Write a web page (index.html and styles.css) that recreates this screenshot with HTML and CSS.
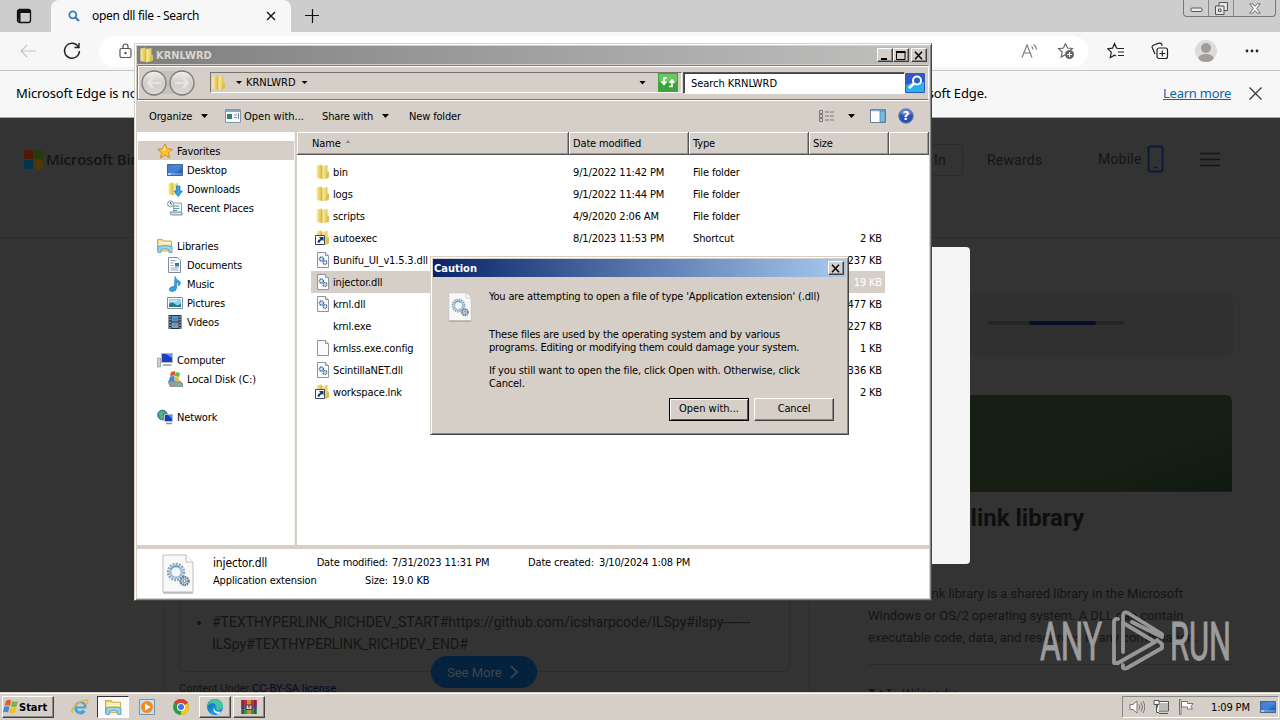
FILE: index.html
```html
<!DOCTYPE html>
<html lang="en">
<head>
<meta charset="utf-8">
<title>Desktop</title>
<link rel="stylesheet" href="styles.css">
</head>
<body>
<svg class="sprite" width="0" height="0">
  <defs>
    <linearGradient id="gFold" x1="0" x2="1"><stop offset="0" stop-color="#fbf2b4"/><stop offset=".5" stop-color="#ecd264"/><stop offset="1" stop-color="#e2c248"/></linearGradient>
    <linearGradient id="gFold2" x1="0" x2="1"><stop offset="0" stop-color="#fbf3b6"/><stop offset="1" stop-color="#e3c44c"/></linearGradient>
    <linearGradient id="gBlue" x1="0" y1="0" x2="1" y2="1"><stop offset="0" stop-color="#1b46a8"/><stop offset=".5" stop-color="#4486e0"/><stop offset="1" stop-color="#163c92"/></linearGradient>
    <linearGradient id="gEdge" x1="0" y1="0" x2="1" y2="1"><stop offset="0" stop-color="#0c59a4"/><stop offset=".6" stop-color="#1b9de2"/><stop offset="1" stop-color="#1070c4"/></linearGradient>
    <linearGradient id="gNav" x1="0" y1="0" x2="0" y2="1"><stop offset="0" stop-color="#f1f0ef"/><stop offset=".5" stop-color="#cfcdc9"/><stop offset="1" stop-color="#dddbd8"/></linearGradient>
  </defs>
  <symbol id="folder" viewBox="0 0 16 16"><path d="M1.500 1.500 7 .5V15l-5.500-1z" fill="url(#gFold)"/><path d="M7 2l5.500-1v13L7 15.500z" fill="url(#gFold2)"/><path d="M12.500 7 14 8v5.500l-4 1.500z" fill="#dfc04a"/><path d="M7 2v13" stroke="#c9a83a" stroke-width=".7"/></symbol>
  <symbol id="shortcut" viewBox="0 0 16 16"><use href="#folder" width="16" height="16"/><path d="M.5 5.500h9v9h-9z" fill="#fff" stroke="#3b4560"/><path d="M2.500 12.500q0-3 3-3.500L4 7h4.500v4L7 10q-2 .5-2.500 2.800z" fill="#17336f"/></symbol>
  <symbol id="page" viewBox="0 0 16 16"><path d="M2.500.5h8l3 3v12h-11z" fill="#fbfbfd" stroke="#8e959d"/><path d="M10.500.5v3h3" fill="#e4e7ea" stroke="#8e959d"/></symbol>
  <symbol id="dll" viewBox="0 0 16 16"><use href="#page" width="16" height="16"/><circle cx="6.500" cy="7" r="2" fill="#dce9f5" stroke="#466c9d" stroke-width="1.500" stroke-dasharray="1.200 .5"/><circle cx="10" cy="10.500" r="1.800" fill="#dce9f5" stroke="#466c9d" stroke-width="1.300" stroke-dasharray="1.200 .5"/></symbol>
  <symbol id="dllbig" viewBox="0 0 32 40"><path d="M1 1h23l7 7v30H1z" fill="#f8f8f8" stroke="#bfbfbf"/><path d="M24 1v7h7" fill="#fff" stroke="#bfbfbf"/><circle cx="14" cy="18" r="8" fill="none" stroke="#8ea5b6" stroke-width="2.500" stroke-dasharray="2 1.100"/><circle cx="14" cy="18" r="5.800" fill="#f4f8fb" stroke="#9fbfdc" stroke-width="2.600"/><path d="M9 15a6 6 0 0 1 8-2" fill="none" stroke="#4c8b98"/><circle cx="22.500" cy="27" r="4" fill="#dce6ee" stroke="#5f7890" stroke-width="2.400" stroke-dasharray="1.600 .7"/><circle cx="22.500" cy="27" r="1.500" fill="#fff" stroke="#5f7890"/><path d="M1 39h30" stroke="#999"/></symbol>
  <symbol id="desktop" viewBox="0 0 16 16"><path d="M.5 2.500h15v11H.5z" fill="url(#gBlue)" stroke="#47648f"/><path d="M1 3h14L1 9z" fill="#5b93e4" opacity=".6"/><path d="M1 12h14" stroke="#9cc4ee"/><path d="M1 12h3" stroke="#eee"/></symbol>
  <symbol id="star" viewBox="0 0 16 16"><path d="M8 .8l2.200 5 5.200.5-4 3.500 1.200 5.200L8 12.200 3.400 15l1.200-5.200-4-3.500 5.200-.5z" fill="#fcc32c" stroke="#d8892c"/><path d="M8 3l1 3.600L5 8z" fill="#ffee8e"/></symbol>
  <symbol id="downloads" viewBox="0 0 16 16"><use href="#folder" width="14" height="16"/><path d="M9.500 5h3.500v5h2.500L11.300 15.500 7 10h2.500z" fill="#37a2ea" stroke="#1674bc" stroke-width=".7"/></symbol>
  <symbol id="recent" viewBox="0 0 16 16"><path d="M4.500 3h10v10h-8V5z" fill="#edf4f8" stroke="#93a4ad"/><path d="M3 12h11q2 0 1 3H5q-2 0-2-3z" fill="#d4dde1" stroke="#84939b"/><path d="M7 6h5M7 8.500h5M7 10.500h3" stroke="#6d97b0"/><circle cx="3.500" cy="3.800" r="3" fill="#f3f6f8" stroke="#87969f"/><path d="M3.500 2v2H5" fill="none" stroke="#567"/></symbol>
  <symbol id="libraries" viewBox="0 0 16 16"><path d="M.5 3V1.500h5L7 3h7.500v10H.5z" fill="#f1dd82" stroke="#c9ad54"/><path d="M2 4.500h12M2 6h12" stroke="#fffadf"/><path d="M1 8.500q7-2 14 0v6h-3v-3q-4-2-8 0v3H1z" fill="#9ad5ed" stroke="#4c9fc8" stroke-width=".8"/></symbol>
  <symbol id="documents" viewBox="0 0 16 16"><path d="M1.500.5h9l3 3v12h-12z" fill="#fff" stroke="#7c8b9b"/><path d="M3.500 3.500h5M3.500 6h3M3.500 8.500h3M3.500 11h8M3.500 13h8" stroke="#88a4c4"/><path d="M8 6h4v3.500H8z" fill="#3d74b4"/></symbol>
  <symbol id="music" viewBox="0 0 16 16"><path d="M8 .5q1 3.500 5 5 1 3-1.500 4.500.5-3-2-4V12q0 3-4 3.500-4-.3-3-3 1.500-2.500 5-2z" fill="#38a1df" stroke="#2481c1" stroke-width=".7"/></symbol>
  <symbol id="pictures" viewBox="0 0 16 16"><path d="M.5 2.500h15v11H.5z" fill="#fff" stroke="#7e8e9e"/><path d="M2 4h12v8H2z" fill="#8bd0ef"/><path d="M2 9q3-3 6 0t6-1v4H2z" fill="#287984"/><path d="M3 6h7" stroke="#e9f7fd"/></symbol>
  <symbol id="videos" viewBox="0 0 16 16"><path d="M1.500 1h13v14h-13z" fill="#28313c"/><path d="M4.500 2h7v5.500h-7z" fill="#4f96cf"/><path d="M4.500 8.500h7V14h-7z" fill="#66a7d6"/><path d="M3 2v13M13 2v13" stroke="#e9edf0" stroke-dasharray="1.500 1.300"/><path d="M6 5l4 1M6 12l4-2" stroke="#b4574a"/></symbol>
  <symbol id="computer" viewBox="0 0 16 16"><path d="M.5 6h3v9h-3z" fill="#cdd1d4" stroke="#8e969d" stroke-width=".7"/><path d="M4.500 1.500h11v9h-11z" fill="#1d3fc0" stroke="#b5bbc4"/><path d="M9 2h6v4z" fill="#5d93f2"/><path d="M7 12h7l1 2H5z" fill="#a9b2bb"/></symbol>
  <symbol id="disk" viewBox="0 0 16 16"><path d="M1 10h12l3 3v2.500H3z" fill="#8f9ca2" stroke="#69777e" stroke-width=".6"/><path d="M10 14h4" stroke="#5ce062"/><path d="M4 1l4-1v4.500L3 5z" fill="#e1582a"/><path d="M8.500 1 13 2l-1 4-4-1z" fill="#68b63d"/><path d="M3 5.500 7.500 5v5L2 10z" fill="#3b86d7"/><path d="M8 5.500l4 1-.5 4.500-4-1z" fill="#f3bd29"/></symbol>
  <symbol id="network" viewBox="0 0 16 16"><circle cx="5.500" cy="6" r="5" fill="#3b8fb5" stroke="#356a80" stroke-width=".6"/><path d="M2 4q3-3 5-1L5 6l2 3-3 1z" fill="#63b368"/><path d="M7.500 5.500h8v7h-8z" fill="#183cc0" stroke="#b9c1ca"/><path d="M11 6h4v4z" fill="#508af0"/><path d="M9 14.500h6" stroke="#89939d" stroke-width="1.500"/></symbol>
</svg>

<div class="screen">
  <main class="edge">
    <header class="tabstrip">
      <div class="tabmenu"><svg width="16" height="16" viewBox="0 0 16 16"><rect x="1.500" y="1.500" width="13" height="13" rx="2" fill="none" stroke="#111" stroke-width="1.300"/><path d="M1.500 2h13v3h-13zM1.500 5h3v9h-2z" fill="#111"/></svg></div>
      <div class="tab">
        <svg width="12" height="12" viewBox="0 0 12 12" fill="none" stroke="#3c7dbf" stroke-width="1.800"><circle cx="4.800" cy="4.800" r="3.500"/><path d="M7.500 7.500l3.500 3.500" stroke-width="2.300"/></svg>
        <span class="tabtitle">open dll file - Search</span>
        <svg width="10" height="10" viewBox="0 0 10 10" stroke="#111" stroke-width="1.300"><path d="M1 1l8 8M9 1 1 9"/></svg>
      </div>
      <svg class="newtab" width="14" height="14" viewBox="0 0 14 14" stroke="#111" stroke-width="1.200"><path d="M7.500 0v14M0 6.500h14"/></svg>
      <div class="winctl">
        <span class="wc1"><svg width="13" height="6" viewBox="0 0 13 6"><rect x="1" y="1" width="11" height="3.500" rx="1" fill="#eee" stroke="#555"/></svg></span>
        <span class="wc2"><svg width="13" height="13" viewBox="0 0 13 13" fill="#e6e6e6" stroke="#555"><path d="M4 .5h8.500v8H4z"/><path d="M.5 4H9v8.500H.5z"/><path d="M3.500 7h2.500v2.500H3.500z"/></svg></span>
        <span class="wc3"><svg width="12" height="11" viewBox="0 0 12 11" fill="#f5f5f5" stroke="#666" stroke-width=".9"><path d="M.8.8h3L6 3.300 8.200.8h3L7.800 5.500l3.400 4.700h-3L6 7.700 3.800 10.200h-3l3.400-4.700z"/></svg></span>
      </div>
    </header>
    <div class="toolbar">
      <svg class="back" width="16" height="14" viewBox="0 0 16 14" fill="none" stroke="#c5c5c5" stroke-width="1.200"><path d="M16 7H1M7 1 1 7l6 6"/></svg>
      <svg class="reload" width="18" height="18" viewBox="0 0 18 18" fill="none" stroke="#222" stroke-width="1.400"><path d="M15.500 5A7.500 7.500 0 1 0 16.500 9"/><path d="M16 1v4.500h-4.500"/></svg>
      <div class="omnibox">
        <svg width="14" height="16" viewBox="0 0 14 16" fill="none" stroke="#555" stroke-width="1.200"><rect x="1" y="5.500" width="11" height="9" rx="1.500"/><path d="M4 5.500V3.500a2.500 2.500 0 0 1 5 0v2"/><circle cx="6.500" cy="10" r=".6" fill="#555"/></svg>
        <span class="grow"></span>
        <svg width="17" height="16" viewBox="0 0 17 16" fill="none" stroke="#777" stroke-width="1.100"><path d="M1 14.500 6 2l5 12.500M3 10h6.300M10.500 3.500q1.500 1 1.500 3M12.500 1.500Q15.500 3.500 15.500 6.500"/></svg>
        <svg width="18" height="18" viewBox="0 0 18 18"><path d="M8.500 1.500l2 4.500 5 .5-3.500 3M8.500 1.500 6.500 6l-5 .6 3.700 3.400-1 5 4-2.300" fill="none" stroke="#666" stroke-width="1.200"/><circle cx="12.500" cy="12.500" r="4.500" fill="#666"/><path d="M12.500 10v5M10 12.500h5" stroke="#fff"/></svg>
      </div>
      <div class="actions">
        <svg width="18" height="18" viewBox="0 0 18 18" fill="none" stroke="#222" stroke-width="1.200"><path d="M11 6.500 9.500 6 7.500 1.500 5.500 6.200l-4.700.5 3.500 3.500-1 5.300 4.200-2.300 1.500.8M11 6.500h6M11 10h6M11 13.500h6"/></svg>
        <svg width="18" height="18" viewBox="0 0 18 18" fill="none" stroke="#222" stroke-width="1.200"><rect x="6" y="6" width="10.500" height="10.500" rx="2"/><path d="M11.300 8.500v6M8.300 11.500h6M4 12 1.200 5.500Q.8 4 2.300 3.200L8 1.200q2-.5 2.700 1l.5 1.500"/></svg>
        <svg width="22" height="22" viewBox="0 0 22 22"><circle cx="11" cy="11" r="11" fill="#dedbd8"/><circle cx="11" cy="8" r="5" fill="#a09d9a"/><ellipse cx="11" cy="18" rx="7.500" ry="4" fill="#a09d9a"/></svg>
        <svg width="14" height="4" viewBox="0 0 14 4" fill="#222"><circle cx="2" cy="2" r="1.400"/><circle cx="7" cy="2" r="1.400"/><circle cx="12" cy="2" r="1.400"/></svg>
      </div>
    </div>
    <div class="infobar">
      <span class="infoleft">Microsoft Edge is not</span>
      <span class="inforight">Microsoft Edge.</span>
      <a class="learn">Learn more</a>
      <svg width="13" height="13" viewBox="0 0 13 13" stroke="#333" stroke-width="1.200"><path d="M.5.5l12 12M12.500.5l-12 12"/></svg>
    </div>
    <section class="page">
      <div class="binghead">
        <svg width="19" height="19" viewBox="0 0 19 19"><path d="M0 0h9v9H0z" fill="#4f1708"/><path d="M10 0h9v9h-9z" fill="#243a08"/><path d="M0 10h9v9H0z" fill="#05354d"/><path d="M10 10h9v9h-9z" fill="#4f3908"/></svg>
        <b class="bing">Microsoft Bing</b>
        <span class="signin">In</span>
        <span class="rewards">Rewards</span>
        <span class="mobile">Mobile</span>
        <svg class="phone" width="18" height="28" viewBox="0 0 18 28"><rect x="1.500" y="1.500" width="14" height="25" rx="2" fill="none" stroke="#10183a" stroke-width="2"/><path d="M6.500 22.500h4" stroke="#10183a" stroke-width="1.500"/></svg>
        <svg width="20" height="15" viewBox="0 0 20 15" stroke="#151515" stroke-width="1.600"><path d="M0 1.500h20M0 7.500h20M0 13.500h20"/></svg>
      </div>
      <div class="results">
        <div class="answer">
          <div class="quote">
            <ul><li>#TEXTHYPERLINK_RICHDEV_START#https://github.com/icsharpcode/ILSpy#ilspy-------<br>ILSpy#TEXTHYPERLINK_RICHDEV_END#</li></ul>
          </div>
          <div class="license">Content Under <a>CC-BY-SA license</a></div>
          <div class="seemore">See More <svg width="8" height="14" viewBox="0 0 8 14" fill="none" stroke="#41464b" stroke-width="1.600"><path d="M1 1l6 6-6 6"/></svg></div>
        </div>
        <aside class="panel">
          <div class="loader"><span class="track"><i></i></span></div>
          <div class="hero"></div>
          <h2>Dynamic link library</h2>
          <p><span class="first">A dynamic link library is a shared library in the Microsoft</span><span>Windows or OS/2 operating system. A DLL can contain</span><span>executable code, data, and resources in any combination.</span></p>
          <div class="wiki"><b>W</b><span>Wikipedia</span></div>
        </aside>
      </div>
    </section>
  </main>
  <div class="modal"></div>

  <section class="explorer win">
    <div class="titlebar gray">
      <svg width="16" height="16"><use href="#folder"/></svg><b>KRNLWRD</b>
      <span class="cap"><svg width="10" height="9" viewBox="0 0 10 9"><path d="M1 7h6v2H1z"/></svg></span><span class="cap"><svg width="10" height="9" viewBox="0 0 10 9"><path d="M.5 1h8.500v7.500H.5z" fill="none" stroke="#000"/><path d="M0 0h9.500v2H0z"/></svg></span><span class="cap close"><svg width="10" height="9" viewBox="0 0 10 9" stroke="#000" stroke-width="1.500"><path d="M1 .8l7 7.400M8 .8 1 8.200"/></svg></span>
    </div>
    <div class="navrow">
      <div class="navbtns">
        <svg width="54" height="26" viewBox="0 0 54 26"><path d="M10 1h33v23H10z" fill="#c3c0bb"/><g fill="url(#gNav)" stroke="#7d7b77" stroke-width="1.300"><circle cx="13" cy="13" r="12"/><circle cx="41" cy="13" r="12"/></g><path d="M20 13H7M12 8l-5 5 5 5M34 13h13M42 8l5 5-5 5" fill="none" stroke="#e6e5e3" stroke-width="2.500"/></svg>
      </div>
      <div class="address">
        <svg width="16" height="16"><use href="#folder"/></svg>
        <i class="dn small"></i><span class="crumb">KRNLWRD</span><i class="dn small"></i><span class="grow"></span><i class="dn"></i>
        <svg class="refresh" width="20" height="19" viewBox="0 0 20 19"><rect width="20" height="19" fill="#3aa53b"/><path d="M1 1h18v8H1z" fill="#6bc765"/><path d="M9 5H6v6M3.500 8.500 6 11.500l2.500-3M11 13.500h3V8M11.500 10 14 7l2.500 3" fill="none" stroke="#fff" stroke-width="1.600"/></svg>
      </div>
      <div class="search">Search KRNLWRD</div>
      <svg class="searchbtn" width="20" height="20" viewBox="0 0 20 20"><rect width="20" height="20" rx="1" fill="#3058c9"/><path d="M1 12q9-4 18-3v10H1z" fill="#2bb1e6"/><circle cx="12" cy="7.500" r="4" fill="#2b63cf" stroke="#fff" stroke-width="2"/><path d="M9 10.500 4 15" stroke="#fff" stroke-width="2.600"/></svg>
    </div>
    <div class="cmdrow">
      <span class="organize">Organize</span><i class="dn"></i>
      <svg class="openico" width="16" height="14" viewBox="0 0 16 14"><path d="M.5.5h15v13H.5z" fill="#f7fafc" stroke="#8194a8"/><path d="M1 2h14" stroke="#8aa7c4" stroke-width="2"/><path d="M2 5h5v5H2z" fill="#2e8664"/><path d="M9 6h3M9 8.500h3" stroke="#7894aa"/><path d="M13.500 4v6" stroke="#748da2"/></svg>
      <span class="openwith">Open with...</span><span class="share">Share with</span><i class="dn"></i><span class="newfolder">New folder</span>
      <span class="grow"></span>
      <svg class="views" width="16" height="13" viewBox="0 0 16 13" fill="none" stroke="#777"><path d="M.5.500h3v3h-3zM.5 4.500h3v3h-3zM.5 8.500h3v3h-3zM6 2h4M11 2h4M6 6h4M11 6h4M6 10h4M11 10h4"/></svg>
      <i class="dn"></i>
      <svg class="preview" width="16" height="14" viewBox="0 0 16 14"><path d="M.5.5h15v13H.5z" fill="#fff" stroke="#6480a0"/><path d="M1 1.500h14" stroke="#85a9cf" stroke-width="1.500"/><path d="M10 2h5v11h-5z" fill="#71c0e4" stroke="#467ca0" stroke-width=".7"/></svg>
      <svg width="16" height="16" viewBox="0 0 16 16"><circle cx="8" cy="8" r="7.300" fill="#2c51b4" stroke="#7383a8"/><path d="M2 6a6 5 0 0 1 12 0q-6 3-12 0" fill="#6e92df" opacity=".7"/><text x="8" y="12" class="q">?</text></svg>
    </div>
    <div class="panes">
      <nav class="tree">
        <div class="node sel"><svg width="16" height="16"><use href="#star"/></svg><span>Favorites</span></div>
        <div class="node sub"><svg width="16" height="16"><use href="#desktop"/></svg><span>Desktop</span></div>
        <div class="node sub"><svg width="16" height="16"><use href="#downloads"/></svg><span>Downloads</span></div>
        <div class="node sub"><svg width="16" height="16"><use href="#recent"/></svg><span>Recent Places</span></div>
        <div class="node head"><svg width="16" height="16"><use href="#libraries"/></svg><span>Libraries</span></div>
        <div class="node sub"><svg width="16" height="16"><use href="#documents"/></svg><span>Documents</span></div>
        <div class="node sub"><svg width="16" height="16"><use href="#music"/></svg><span>Music</span></div>
        <div class="node sub"><svg width="16" height="16"><use href="#pictures"/></svg><span>Pictures</span></div>
        <div class="node sub"><svg width="16" height="16"><use href="#videos"/></svg><span>Videos</span></div>
        <div class="node head"><svg width="16" height="16"><use href="#computer"/></svg><span>Computer</span></div>
        <div class="node sub"><svg width="16" height="16"><use href="#disk"/></svg><span>Local Disk (C:)</span></div>
        <div class="node head"><svg width="16" height="16"><use href="#network"/></svg><span>Network</span></div>
      </nav>
      <div class="files">
        <div class="cols"><span class="cname">Name <i class="sortup"></i></span><span>Date modified</span><span>Type</span><span>Size</span><span></span></div>
        <div class="rows">
          <div class="row"><svg width="16" height="16"><use href="#folder"/></svg><span>bin</span><span>9/1/2022 11:42 PM</span><span>File folder</span><span></span></div>
          <div class="row"><svg width="16" height="16"><use href="#folder"/></svg><span>logs</span><span>9/1/2022 11:44 PM</span><span>File folder</span><span></span></div>
          <div class="row"><svg width="16" height="16"><use href="#folder"/></svg><span>scripts</span><span>4/9/2020 2:06 AM</span><span>File folder</span><span></span></div>
          <div class="row"><svg width="16" height="16"><use href="#shortcut"/></svg><span>autoexec</span><span>8/1/2023 11:53 PM</span><span>Shortcut</span><span>2 KB</span></div>
          <div class="row"><svg width="16" height="16"><use href="#dll"/></svg><span>Bunifu_UI_v1.5.3.dll</span><span></span><span></span><span>237 KB</span></div>
          <div class="row picked"><svg width="16" height="16"><use href="#dll"/></svg><span>injector.dll</span><span></span><span></span><span>19 KB</span></div>
          <div class="row"><svg width="16" height="16"><use href="#dll"/></svg><span>krnl.dll</span><span></span><span></span><span>477 KB</span></div>
          <div class="row"><i></i><span>krnl.exe</span><span></span><span></span><span>227 KB</span></div>
          <div class="row"><svg width="16" height="16"><use href="#page"/></svg><span>krnlss.exe.config</span><span></span><span></span><span>1 KB</span></div>
          <div class="row"><svg width="16" height="16"><use href="#dll"/></svg><span>ScintillaNET.dll</span><span></span><span></span><span>336 KB</span></div>
          <div class="row"><svg width="16" height="16"><use href="#shortcut"/></svg><span>workspace.lnk</span><span></span><span></span><span>2 KB</span></div>
        </div>
      </div>
    </div>
    <div class="details">
      <svg width="32" height="40"><use href="#dllbig"/></svg>
      <div class="dcol d1"><span class="big">injector.dll</span><span>Application extension</span></div>
      <div class="dcol d2"><span>Date modified:</span><span>Size:</span></div>
      <div class="dcol d3"><span>7/31/2023 11:31 PM</span><span>19.0 KB</span></div>
      <div class="dcol d4"><span>Date created:</span></div>
      <div class="dcol"><span>3/10/2024 1:08 PM</span></div>
    </div>
  </section>

  <section class="caution win">
    <div class="titlebar blue"><b>Caution</b><span class="cap close"><svg width="10" height="9" viewBox="0 0 10 9" stroke="#000" stroke-width="1.500"><path d="M1 .8l7 7.400M8 .8 1 8.200"/></svg></span></div>
    <div class="cbody">
      <svg width="24" height="30" viewBox="0 0 32 40"><use href="#dllbig" width="32" height="40"/></svg>
      <div class="ctext">
        <p class="c1">You are attempting to open a file of type 'Application extension' (.dll)</p>
        <p class="c2">These files are used by the operating system and by various<br><span class="tight">programs. Editing or modifying them could damage your system.</span></p>
        <p class="c3">If you still want to open the file, click Open with. Otherwise, click<br>Cancel.</p>
      </div>
    </div>
    <div class="cbtns"><button class="default">Open with...</button><button>Cancel</button></div>
  </section>

  <svg class="mark" width="196" height="64" viewBox="0 0 196 64">
    <g class="markfont"><text x="3" y="51" textLength="62" lengthAdjust="spacingAndGlyphs">ANY</text><text x="133" y="51" textLength="61" lengthAdjust="spacingAndGlyphs">RUN</text></g>
    <g fill="none" stroke="#a0a0a0" stroke-width="3.800" stroke-linejoin="round" stroke-linecap="round"><path d="M81 10q-4-1-4 3v41h4l37-21-30-18"/><path d="M86 43V6q1-4 5-2l34 21v3L95 13"/><path d="M120 31l5 4v4L90 59q-5 2-4-3"/></g>
  </svg>

  <footer class="taskbar">
    <div class="start"><svg width="16" height="16" viewBox="0 0 16 16"><path d="M3 2q3-2 5-.5L7 7Q4.500 5.500 1.500 7z" fill="#e75a2b"/><path d="M9 2q3 1.500 6 0l-1.500 5.500q-3 1.500-5.500 0z" fill="#75b843"/><path d="M1.200 8Q4 6.500 6.500 8L5 13.500Q3 12 0 13.500z" fill="#3d8bd6"/><path d="M7.700 8.500q3 1.500 5.500 0L12 14q-3 1.500-5.800 0z" fill="#f5c02d"/></svg>Start</div>
    <div class="tb ie"><svg width="18" height="16" viewBox="0 0 18 16"><path d="M14.500 8.500H5a4 4 0 0 0 7.500 2.500M4.500 8a5 5 0 1 1 10 .5M4.700 8a5 5 0 0 0 9 4" fill="none" stroke="#43a3df" stroke-width="2.200"/><path d="M2 14Q-1 12 4 7 10 1 16 1q2 1-1 5" fill="none" stroke="#e7b436" stroke-width="1.400"/></svg></div>
    <div class="tb pressed"><svg width="17" height="17"><use href="#libraries"/></svg></div>
    <div class="tb"><svg width="16" height="16" viewBox="0 0 16 16"><path d="M.5.5h15v15H.5z" fill="#c4e1f3" stroke="#6c97b7"/><circle cx="8" cy="8" r="6" fill="#f28b1c"/><path d="M6 4.500 11.500 8 6 11.500z" fill="#fff"/></svg></div>
    <div class="tb"><svg width="16" height="16" viewBox="0 0 16 16"><circle cx="8" cy="8" r="8" fill="#2b9b4b"/><path d="M8 8 1.100 4A8 8 0 0 1 14.900 4z" fill="#e13c31"/><path d="M8 8l6.900-4A8 8 0 0 1 8 16z" fill="#f9c620"/><circle cx="8" cy="8" r="4" fill="#fff"/><circle cx="8" cy="8" r="3" fill="#3b7be8"/></svg></div>
    <div class="tb raised"><svg width="16" height="16" viewBox="0 0 16 16"><circle cx="8" cy="8" r="8" fill="url(#gEdge)"/><path d="M1 5Q4-.5 9 .2 16 1 16 7q-.3 4-5 4-2.500-.5-1.500-2.500Q9 4 5 4.300 2 4.500.2 8z" fill="#43c6a0"/><path d="M7 9q1 5 7.500 3.500l-3 2.800Q5 14 7 8z" fill="#e9f3f5"/></svg></div>
    <div class="tb raised"><svg width="16" height="14" viewBox="0 0 16 14"><path d="M0 0h16v5H0z" fill="#bd2f4c"/><path d="M0 5h16v4.500H0z" fill="#3965b5"/><path d="M0 9.500h16V14H0z" fill="#33934a"/><path d="M6 0h4v14H6z" fill="#c8922e"/><path d="M5 5h6v4.500H5z" fill="#d6d3d3" stroke="#5c302a"/><path d="M8 5v3M2 0v14M14 0v14" stroke="#631c26"/></svg></div>
    <span class="grow"></span>
    <div class="tray">
      <svg width="16" height="16" viewBox="0 0 16 16" fill="#fff" stroke="#777"><path d="M1 5.500h3L8 2v12l-4-3.500H1z"/><path d="M10 5.500q1.500 2.500 0 5M12 3.500q3 4.500 0 9M14 2q3.500 6 0 12" fill="none"/></svg>
      <svg width="17" height="16" viewBox="0 0 17 16" fill="#fff" stroke="#555"><path d="M5.500 3.500h10v8h-10z" fill="#bbb" stroke="#fff"/><path d="M4.500 2.500h11v9.500h-11zM6 14.500h9" fill="none"/><path d="M1 1.500h5v4H1zM3.500 5.500v8H6"/></svg>
      <svg width="17" height="16" viewBox="0 0 17 16" fill="#fff" stroke="#777"><path d="M1.500.5h1.500v15H1.500z"/><path d="M3.500 2.500h6v2h5.500l-2 3 1.500 2.500h-5V8h-6z"/></svg>
      <span class="clock">1:09 PM</span>
      <svg width="16" height="16"><use href="#desktop"/></svg>
    </div>
  </footer>
</div>
</body>
</html>
```
FILE: styles.css
```css
* { box-sizing: border-box; }
body { margin: 0; overflow: hidden; font: 11px "DejaVu Sans Condensed", "DejaVu Sans", sans-serif; letter-spacing: -.15px; color: #000; }
svg { display: block; flex: none; }
p, h2, ul { margin: 0; padding: 0; }
.sprite { position: absolute; }
.grow { flex: 1; }
.screen { position: relative; width: 1280px; height: 720px; overflow: hidden; display: flex; flex-direction: column; background: #333; }

/* browser */
.edge { height: 692px; overflow: hidden; font-family: "Noto Sans", "Open Sans", sans-serif; letter-spacing: 0; }
.tabstrip { height: 32px; display: flex; background: #cdcdcd; }
.tabmenu { width: 51px; padding: 8px 0 0 16px; }
.tab { width: 240px; display: flex; align-items: center; padding: 0 15px 1px 17px; background: #f7f7f7; border-radius: 8px 8px 0 0; }
.tabtitle { flex: 1; margin-left: 12px; font-size: 12px; letter-spacing: -.3px; }
.newtab { margin: 9px 0 0 14px; }
.winctl { display: flex; margin-left: auto; margin-right: 4px; height: 17px; width: 93px; border: 1px solid #777; border-top: 0; border-radius: 0 0 4px 4px; }
.winctl span { display: flex; align-items: center; justify-content: center; border-right: 1px solid #888; }
.wc1 { width: 25px; padding-top: 4px; }
.wc2 { width: 25px; }
.winctl .wc3 { width: 41px; border: 0; }
.toolbar { height: 39px; display: flex; align-items: center; background: #f7f7f7; border-bottom: 1px solid #c6c6c6; }
.back { margin-left: 20px; }
.reload { margin-left: 27px; }
.omnibox { width: 989px; height: 31px; margin: 0 20px 0 18px; border-radius: 16px; background: #fff; display: flex; align-items: center; padding: 0 13px 0 20px; }
.omnibox svg + svg { margin-left: 19px; }
.actions { display: flex; align-items: center; margin-left: -1px; }
.actions svg:nth-child(2) { margin-left: 26px; }
.actions svg:nth-child(3) { margin-left: 26px; }
.actions svg:nth-child(4) { margin-left: 28px; }
.infobar { height: 47px; display: flex; align-items: center; background: #f7f7f7; border-bottom: 1px solid #aaa; padding: 0 17px 2px 16px; font-size: 13px; letter-spacing: -.12px; }
.infoleft { width: 877px; }
.inforight { width: 270px; flex: none; margin-left: 1px; }
.learn { color: #0f65a8; text-decoration: underline; width: 86px; flex: none; letter-spacing: -.25px; margin-left: -1px; }
.page { height: 574px; background: #333; color: #151515; font-family: Roboto, sans-serif; }
.binghead { height: 120px; border-bottom: 1px solid #2b2b2b; display: flex; align-items: flex-start; padding: 32px 0 0 24px; font-size: 14px; letter-spacing: .2px; }
.bing { margin-left: 3px; width: 854px; font: 600 15px/18px "Open Sans", sans-serif; letter-spacing: -.2px; }
.signin { width: 63px; height: 32px; margin-top: -6px; padding: 7px 16px; text-align: right; border: 1px solid #2b2b2b; border-radius: 4px; }
.rewards { margin-left: 24px; width: 111px; padding-top: 2px; }
.mobile { width: 49px; padding-top: 1px; }
.phone { margin-top: -5px; margin-right: 35px; }
.binghead svg:last-child { margin-top: 2px; }
.results { height: 454px; display: grid; grid-template-columns: 645px 400px; column-gap: 29px; padding-left: 164px; }
.answer { border: 1px solid #2f2f2f; border-width: 0 1px; padding: 0 18px 0 14px; }
.quote { height: 434px; border: 1px solid #2c2c2c; border-radius: 6px; padding: 372px 0 0 32px; font-size: 14px; line-height: 22px; }
.quote ul { white-space: nowrap; }
.license { height: 15px; margin-top: 9px; font-size: 11px; line-height: 15px; }
.license a { color: #080824; text-decoration: underline; }
.seemore { position: relative; top: -40px; left: 252px; width: 106px; height: 32px; border-radius: 16px; background: #04223d; color: #41464b; font-size: 13px; display: flex; align-items: center; justify-content: space-between; padding: 0 19px 0 16px; }
.panel { padding: 54px 6px 0 30px; }
.loader { height: 65px; margin-right: -1px; border-radius: 8px; background: #303030; display: flex; align-items: center; padding: 0 0 3px 120px; }
.track { display: flex; width: 136px; height: 4px; border-radius: 2px; background: #262626; padding-left: 41px; }
.track i { width: 67px; background: #070e2c; border-radius: 2px; }
.hero { height: 97px; margin-top: 38px; border-radius: 6px 6px 0 0; background: linear-gradient(160deg, #171e14, #171f14 70%, #101910); border-bottom: 1px solid #1b200f; }
.panel h2 { margin-top: 11px; height: 81px; width: 216px; display: flex; justify-content: flex-end; font-size: 24px; line-height: 30px; color: #0e0e0e; white-space: nowrap; }
.panel p { height: 82px; font-size: 13px; line-height: 22px; margin-top: -1px; border-bottom: 1px solid #2b2b2b; display: flex; flex-direction: column; white-space: nowrap; }
.panel p .first { width: 315px; display: flex; justify-content: flex-end; }
.wiki { display: flex; gap: 10px; padding-top: 17px; }
.wiki b { font: 700 24px/28px "Liberation Serif", serif; }
.wiki span { padding-top: 4px; font-size: 13px; }
.modal { position: absolute; left: 310px; top: 247px; width: 660px; height: 317px; border-radius: 4px; background: #f5f5f5; }

/* classic windows */
.win { position: absolute; background: #d5cfc7; border: 1px solid; border-color: #d5cfc7 #444 #444 #d5cfc7; box-shadow: inset 1px 1px #fff, inset -1px -1px #888; padding: 2px; white-space: nowrap; }
.explorer { left: 134px; top: 43px; width: 798px; height: 558px; display: flex; flex-direction: column; }
.titlebar { height: 18px; display: flex; align-items: center; padding: 0 2px; color: #fff; }
.titlebar b { flex: 1; letter-spacing: 0; }
.gray { background: linear-gradient(90deg, #7f7f7f, #c1c1c0); color: #d8d5ce; }
.gray b { margin-left: 1px; }
.blue { background: linear-gradient(90deg, #0a246a, #a6caf0); padding-left: 1px; }
.cap { width: 16px; height: 14px; background: #d5cfc7; border: 1px solid; border-color: #fff #404040 #404040 #fff; box-shadow: inset -1px -1px #888; display: flex; align-items: center; justify-content: center; padding-right: 1px; }
.gray .close { margin-left: 2px; }
.navrow { height: 35px; margin-top: 1px; display: flex; align-items: center; border: 1px solid #7d7a75; border-right-color: #fff; border-bottom-color: #77736e; box-shadow: inset 1px 1px #fff, 0 1px #fff; padding-left: 3px; }
.navbtns { width: 69px; }
.address { width: 472px; height: 21px; display: flex; align-items: center; border: 1px solid; border-color: #77736e #fff #fff #77736e; }
.crumb { margin: 0 6px 0 4px; letter-spacing: 0; }
.address svg + .small { margin-left: 9px; }
.dn { display: block; flex: none; width: 7px; height: 4px; background: #000; clip-path: polygon(0 0, 100% 0, 50% 100%); }
.dn.small { width: 6px; height: 3px; }
.refresh { margin-left: 12px; margin-right: 3px; }
.search { width: 222px; height: 22px; margin-left: 1px; padding: 4px 7px; background: #fff; border: 1px solid; border-color: #555 #fff #fff #555; box-shadow: inset 1px 1px #444; letter-spacing: -.05px; }
.cmdrow { height: 32px; display: flex; align-items: center; padding: 0 15px 0 12px; }
.organize { width: 52px; }
.openico { margin-left: 17px; }
.openwith { margin-left: 3px; width: 78px; letter-spacing: 0; }
.share { width: 60px; }
.newfolder { margin-left: 20px; }
.views { margin-right: 13px; }
.preview { margin: 0 12px 0 15px; }
.q { font: 700 12px "DejaVu Sans"; fill: #fff; text-anchor: middle; }
.panes { height: 413px; display: flex; gap: 2px; }
.tree { width: 158px; background: #fff; padding-top: 9px; border-right: 1px solid #f2f0ec; }
.node { height: 19px; display: flex; align-items: center; gap: 4px; padding-left: 20px; }
.node span { padding-top: 1px; }
.node.sub { padding-left: 30px; }
.node.head { margin-top: 19px; }
.sel { background: #d5cfc7; margin-left: 1px; padding-left: 19px; }
.files { flex: 1; background: #fff; }
.cols { height: 23px; display: grid; grid-template-columns: 272px 120px 120px 80px 40px; border-bottom: 1px solid #555; }
.cols span { padding: 5px 0 0 4px; background: #d5cfc7; border-right: 1px solid #555; box-shadow: inset 1px 1px #fff, inset -1px -1px #999; }
.cols .cname { padding-left: 15px; }
.sortup { display: inline-block; vertical-align: 4px; width: 5px; height: 3px; margin-left: 2px; background: #8b8b8b; clip-path: polygon(50% 0, 100% 100%, 0 100%); }
.rows { padding: 6px 0 0 14px; }
.row { width: 574px; height: 22px; display: grid; grid-template-columns: 18px 240px 120px 120px 69px; align-items: center; padding-left: 4px; }
.row span:last-child { text-align: right; }
.picked { background: #d5cfc7; }
.picked span:last-child { color: #fff; }
.details { height: 49px; margin-top: 4px; background: #fff; display: flex; padding: 5px 0 0 25px; }
.dcol { display: flex; flex-direction: column; line-height: 18px; margin-left: 4px; }
.d1 { width: 101px; margin-left: 19px; }
.d2 { width: 70px; align-items: flex-end; }
.d3 { width: 132px; }
.d4 { width: 67px; }
.big { font-size: 12px; }
.caution { left: 430px; top: 256px; width: 419px; height: 179px; }
.cbody { display: flex; padding: 13px 0 0 15px; height: 118px; }
.cbody > svg { margin-top: 2px; }
.ctext { margin-left: 17px; line-height: 13px; }
.tight { letter-spacing: -.22px; }
.c2 { margin-top: 25px; }
.c3 { margin-top: 10px; }
.cbtns { display: flex; justify-content: flex-end; gap: 5px; padding: 3px 12px 0 0; }
button { width: 80px; height: 23px; padding: 0 0 2px; font: inherit; letter-spacing: inherit; color: #000; background: #d5cfc7; border: 1px solid; border-color: #fff #404040 #404040 #fff; box-shadow: inset -1px -1px #888; }
.default { border-color: #000; box-shadow: inset 1px 1px #fff, inset -1px -1px #555; letter-spacing: 0; }
.mark { position: absolute; left: 1037px; top: 609px; opacity: .92; }
.markfont { font: 400 53px Roboto, sans-serif; letter-spacing: 0; fill: #a5a5a5; stroke: #a5a5a5; stroke-width: 1px; }

/* taskbar */
.taskbar { height: 28px; display: flex; padding: 4px 1px 2px 2px; background: #d5cfc7; box-shadow: inset 0 1px #d5cfc7, inset 0 2px #fff; }
.start { width: 52px; height: 22px; display: flex; align-items: center; font-weight: 700; border: 1px solid; border-color: #fff #444 #444 #fff; box-shadow: inset -1px -1px #888; letter-spacing: 0; }
.tb { width: 34px; height: 22px; display: flex; align-items: center; justify-content: center; }
.ie { margin-left: 8px; width: 35px; }
.pressed { width: 32px; margin-right: 1px; background: #fbfaf8; border: 1px solid; border-color: #333 #fff #fff #333; }
.raised { border: 1px solid; border-color: #fff #444 #444 #fff; box-shadow: inset -1px -1px #888; width: 32px; margin-left: 1px; margin-right: 1px; }
.tray { width: 157px; height: 22px; display: flex; align-items: center; border: 1px solid; border-color: #888 #fff #fff #888; padding: 0 2px 0 6px; gap: 8px; }
.clock { margin-left: 8px; flex: 1; }
```
